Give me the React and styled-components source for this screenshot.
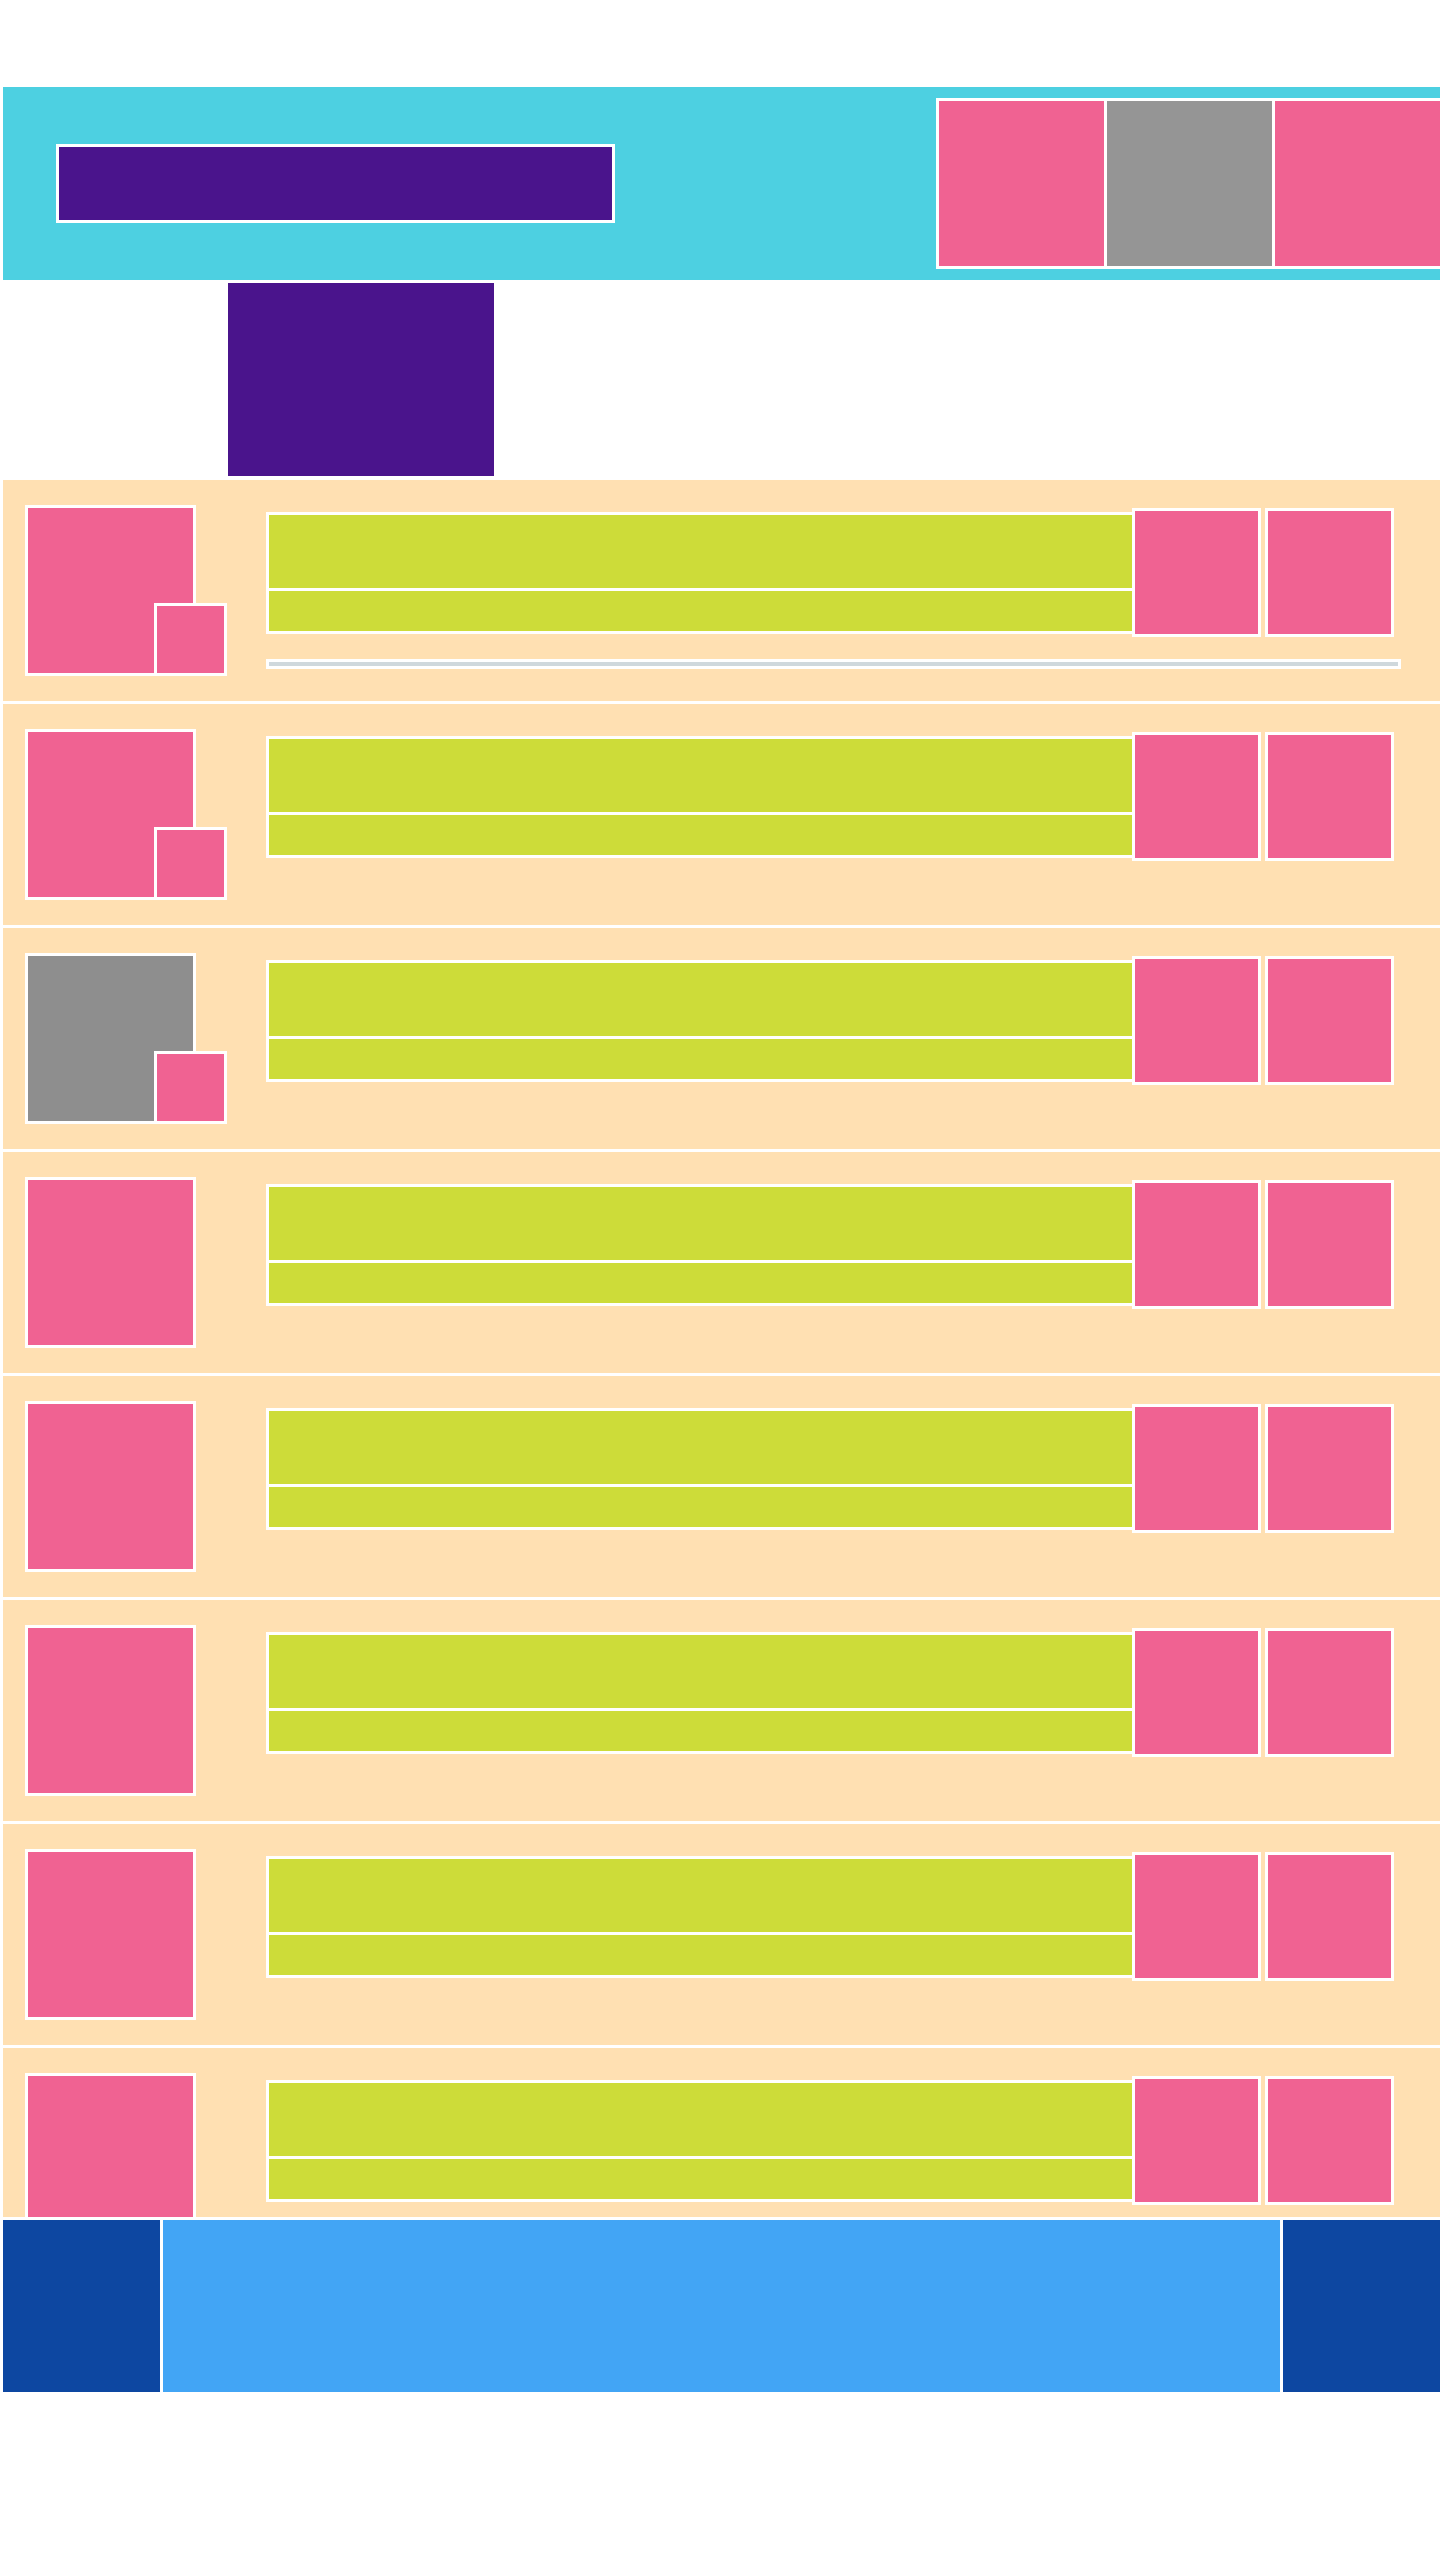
import React from "react";
import styled, { createGlobalStyle } from "styled-components";

const GlobalStyle = createGlobalStyle`
  html, body {
    margin: 0;
    padding: 0;
    background: #ffffff;
    overflow-x: hidden;
    font-family: "Liberation Sans", Arial, sans-serif;
  }
`;

const Page = styled.div`
  width: 1440px;
  margin-left: 3px;
  padding-top: 87px;
  display: flex;
  flex-direction: column;
`;

const Header = styled.header`
  height: 193px;
  background: #4dd0e1;
  display: flex;
  align-items: center;
  justify-content: space-between;
  padding-left: 53px;
  box-sizing: border-box;
`;

const SearchBox = styled.div`
  width: 559px;
  height: 79px;
  box-sizing: border-box;
  border: 3px solid #ffffff;
  background: #4a148c;
`;

const NavGroup = styled.nav`
  display: flex;
  gap: 3px;
  padding: 3px;
  background: #ffffff;
`;

const NavItem = styled.div`
  width: 165px;
  height: 165px;
  background: ${(p) => (p.$muted ? "#959595" : "#f06292")};
`;

const Hero = styled.div`
  width: 266px;
  height: 193px;
  margin: 3px 0 4px 225px;
  background: #4a148c;
`;

const List = styled.main`
  height: 1737px;
  overflow: hidden;
  display: flex;
  flex-direction: column;
  gap: 3px;
  background: #ffffff;
`;

const Row = styled.div`
  flex: 0 0 221px;
  height: 221px;
  box-sizing: border-box;
  padding: 25px 42px 0 22px;
  background: #ffe0b2;
  display: flex;
`;

const AvatarCol = styled.div`
  flex: 0 0 241px;
`;

const Avatar = styled.div`
  position: relative;
  width: 171px;
  height: 171px;
  box-sizing: border-box;
  border: 3px solid #ffffff;
  background: ${(p) => (p.$muted ? "#8e8e8e" : "#f06292")};
`;

const Badge = styled.div`
  position: absolute;
  right: -34px;
  bottom: -3px;
  width: 73px;
  height: 73px;
  box-sizing: border-box;
  border: 3px solid #ffffff;
  background: #f06292;
`;

const Main = styled.div`
  flex: 1;
  display: flex;
  flex-direction: column;
`;

const TopRow = styled.div`
  display: flex;
  align-items: center;
  margin-top: 3px;
  padding-right: 7px;
`;

const TextBlock = styled.div`
  flex: 1;
  display: flex;
  flex-direction: column;
  gap: 3px;
  border: 3px solid #ffffff;
  border-right: none;
  background: #ffffff;
`;

const Line = styled.div`
  height: ${(p) => p.$h}px;
  background: #cddc39;
`;

const Actions = styled.div`
  display: flex;
  gap: 4px;
`;

const ActionBtn = styled.div`
  width: 129px;
  height: 129px;
  box-sizing: border-box;
  border: 3px solid #ffffff;
  background: #f06292;
`;

const Progress = styled.div`
  margin-top: 22px;
  height: 10px;
  box-sizing: border-box;
  border: 3px solid #ffffff;
  background: #cfd8dc;
`;

const Footer = styled.footer`
  margin-top: 3px;
  height: 172px;
  display: grid;
  grid-template-columns: 157px 1fr 160px;
  gap: 3px;
  background: #ffffff;
`;

const FooterCell = styled.div`
  background: ${(p) => (p.$dark ? "#0d47a1" : "#42a5f5")};
`;

const rows = [
  { badge: true, progress: true },
  { badge: true },
  { badge: true, muted: true },
  {},
  {},
  {},
  {},
  {},
];

export default function App() {
  return (
    <>
      <GlobalStyle />
      <Page>
        <Header>
          <SearchBox />
          <NavGroup>
            <NavItem />
            <NavItem $muted />
            <NavItem />
          </NavGroup>
        </Header>
        <Hero />
        <List>
          {rows.map((r, i) => (
            <Row key={i}>
              <AvatarCol>
                <Avatar $muted={r.muted}>{r.badge && <Badge />}</Avatar>
              </AvatarCol>
              <Main>
                <TopRow>
                  <TextBlock>
                    <Line $h={73} />
                    <Line $h={40} />
                  </TextBlock>
                  <Actions>
                    <ActionBtn />
                    <ActionBtn />
                  </Actions>
                </TopRow>
                {r.progress && <Progress />}
              </Main>
            </Row>
          ))}
        </List>
        <Footer>
          <FooterCell $dark />
          <FooterCell />
          <FooterCell $dark />
        </Footer>
      </Page>
    </>
  );
}
